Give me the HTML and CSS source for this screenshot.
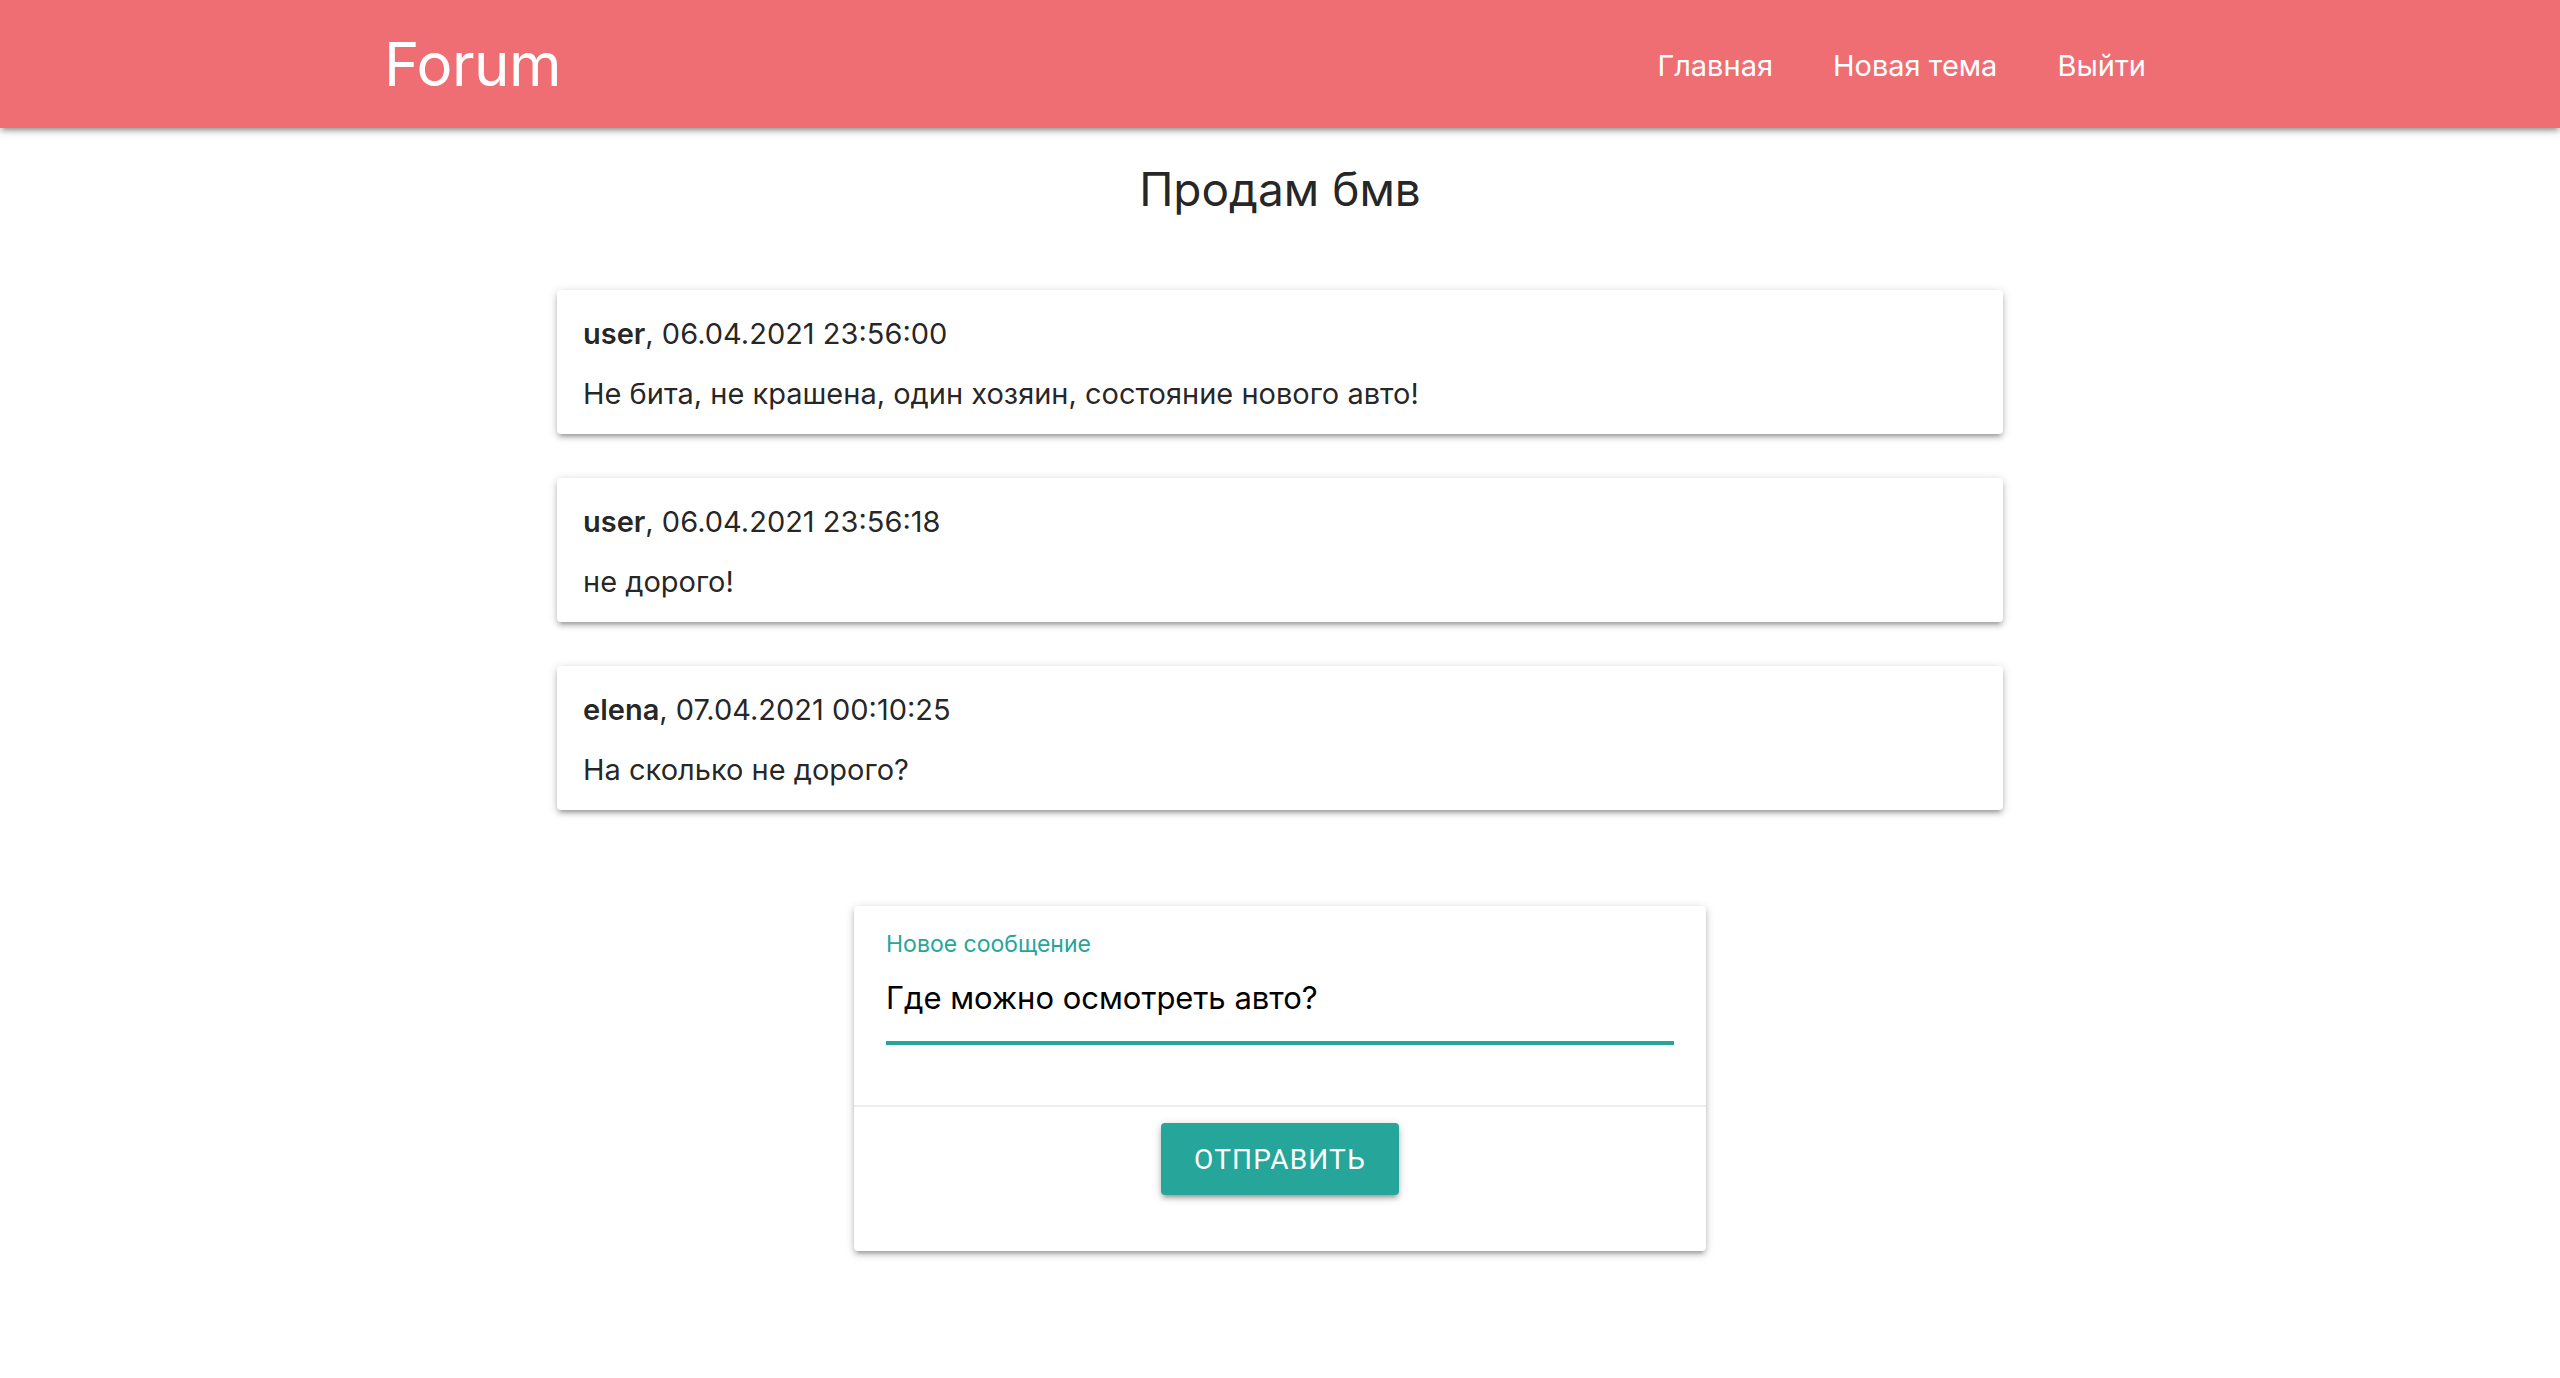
FILE: index.html
```html
<!DOCTYPE html>
<html lang="ru">
<head>
<meta charset="utf-8">
<title>Forum</title>
<link rel="stylesheet" href="styles.css">
</head>
<body>
<nav class="navbar">
  <div class="nav-wrapper">
    <a class="brand-logo" href="#">Forum</a>
    <ul class="nav-links">
      <li><a href="#">Главная</a></li>
      <li><a href="#">Новая тема</a></li>
      <li><a href="#">Выйти</a></li>
    </ul>
  </div>
</nav>
<main class="page">
  <h5 class="topic-title">Продам бмв</h5>
  <div class="posts">
    <div class="card post">
      <div class="post-meta"><b>user</b>, 06.04.2021 23:56:00</div>
      <div class="post-text">Не бита, не крашена, один хозяин, состояние нового авто!</div>
    </div>
    <div class="card post">
      <div class="post-meta"><b>user</b>, 06.04.2021 23:56:18</div>
      <div class="post-text">не дорого!</div>
    </div>
    <div class="card post">
      <div class="post-meta"><b>elena</b>, 07.04.2021 00:10:25</div>
      <div class="post-text">На сколько не дорого?</div>
    </div>
  </div>
  <form class="card reply">
    <div class="reply-content">
      <label class="field-label">Новое сообщение</label>
      <div class="field-input">Где можно осмотреть авто?</div>
    </div>
    <div class="reply-action">
      <button type="button" class="btn">Отправить</button>
    </div>
  </form>
</main>
</body>
</html>
```
FILE: styles.css
```css
html, body {
  margin: 0;
  padding: 0;
  background: #fff;
}
body {
  font-family: "Inter", "Noto Sans", sans-serif;
  color: rgba(0, 0, 0, 0.87);
}
.navbar {
  background: #ee6e73;
  height: 128px;
  box-shadow: 0 4px 4px 0 rgba(0,0,0,.14), 0 6px 2px -4px rgba(0,0,0,.12), 0 2px 10px 0 rgba(0,0,0,.2);
}
.nav-wrapper {
  width: 70%;
  margin: 0 auto;
  height: 128px;
  display: flex;
  justify-content: space-between;
  align-items: stretch;
}
.brand-logo {
  color: #fff;
  text-decoration: none;
  font-size: 60px;
  line-height: 128px;
  letter-spacing: -0.5px;
}
.nav-links {
  list-style: none;
  margin: 0;
  padding: 0;
  display: flex;
}
.nav-links a {
  display: block;
  color: #fff;
  text-decoration: none;
  font-size: 29px;
  line-height: 122px;
  padding: 5px 30px 0;
}
.page {
  display: flex;
  flex-direction: column;
  align-items: center;
}
.topic-title {
  margin: 34px 0 0;
  font-size: 46px;
  font-weight: 400;
  line-height: 54px;
  color: rgba(0,0,0,0.87);
}
.posts {
  margin-top: 74px;
  display: flex;
  flex-direction: column;
  gap: 44px;
}
.card {
  background: #fff;
  border-radius: 4px;
  box-shadow: 0 4px 4px 0 rgba(0,0,0,.14), 0 6px 2px -4px rgba(0,0,0,.12), 0 2px 10px 0 rgba(0,0,0,.2);
}
.post {
  width: 1446px;
  box-sizing: border-box;
  padding: 21px 26px 18px;
  display: flex;
  flex-direction: column;
  gap: 15px;
  font-size: 29px;
  line-height: 45px;
}
.post-meta b {
  font-weight: 600;
}
.reply {
  margin-top: 96px;
  width: 852px;
  margin-bottom: 100px;
}
.reply-content {
  padding: 23px 32px 60px;
  display: flex;
  flex-direction: column;
}
.field-label {
  color: #26a69a;
  font-size: 23px;
  line-height: 30px;
}
.field-input {
  margin-top: 17px;
  font-size: 31px;
  line-height: 44px;
  color: #000;
  padding-bottom: 21px;
  border-bottom: 4px solid #26a69a;
}
.reply-action {
  border-top: 2px solid rgba(160,160,160,0.2);
  padding: 16px 0 56px;
  display: flex;
  justify-content: center;
}
.btn {
  height: 72px;
  padding: 0 33px;
  border: none;
  border-radius: 4px;
  background: #26a69a;
  color: #fff;
  font-family: "Roboto", sans-serif;
  font-size: 28px;
  letter-spacing: 1.2px;
  text-transform: uppercase;
  box-shadow: 0 4px 4px 0 rgba(0,0,0,.14), 0 6px 2px -4px rgba(0,0,0,.12), 0 2px 10px 0 rgba(0,0,0,.2);
  cursor: pointer;
}
```
